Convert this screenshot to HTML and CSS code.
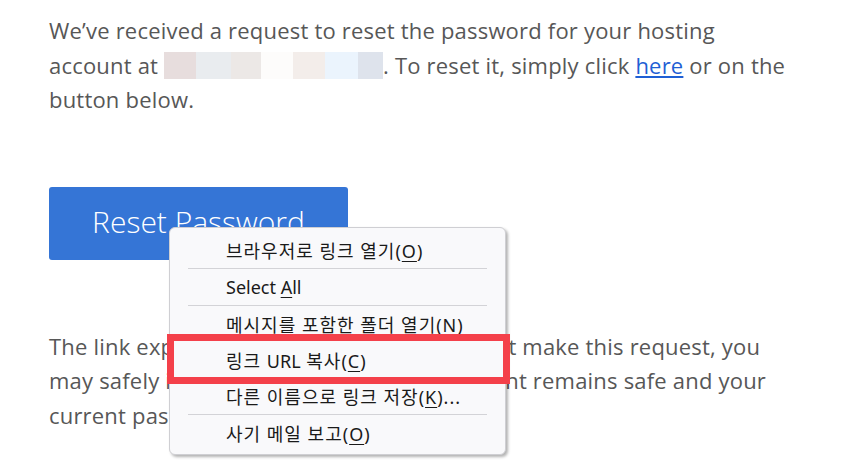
FILE: index.html
```html
<!DOCTYPE html>
<html lang="en">
<head>
<meta charset="utf-8">
<title>Reset password</title>
<link rel="stylesheet" href="styles.css">
</head>
<body>
<div class="mail">
  <p class="para">We’ve received a request to reset the password for your hosting<br>account at <span class="blur"><span class="b1"></span><span class="b2"></span><span class="b3"></span><span class="b4"></span><span class="b5"></span><span class="b6"></span><span class="b7"></span></span>. To reset it, simply click <a class="link" href="#">here</a> or on the<br>button below.</p>
  <a class="btn" href="#">Reset Password</a>
  <p class="para para2">The link expires after 24 hours. If you did not make this request, you<br>may safely ignore this email and your account remains safe and your<br>current password will not be changed.</p>
</div>

<div class="menu">
  <div class="item"><span>브라우저로 링크 열기(<u>O</u>)</span></div>
  <div class="sep"></div>
  <div class="item"><span class="lat">Select <u>A</u>ll</span></div>
  <div class="sep"></div>
  <div class="item"><span>메시지를 포함한 폴더 열기(<u>N</u>)</span></div>
  <div class="item"><span>링크 <span class="lat">URL</span> 복사(<u>C</u>)</span></div>
  <div class="item"><span>다른 이름으로 링크 저장(<u>K</u>)...</span></div>
  <div class="sep"></div>
  <div class="item"><span>사기 메일 보고(<u>O</u>)</span></div>
</div>
<div class="highlight"></div>
</body>
</html>
```

FILE: styles.css
```css
html, body {
  margin: 0;
  padding: 0;
  background: #ffffff;
}
body {
  width: 857px;
  height: 470px;
  overflow: hidden;
  position: relative;
}
.mail {
  padding: 13px 0 0 49px;
  font-family: "Open Sans", "Liberation Sans", sans-serif;
  font-size: 22px;
  line-height: 34.5px;
  color: #575757;
  letter-spacing: 0.2px;
}
.para {
  margin: 0;
  white-space: nowrap;
}
.para2 {
  margin-top: 69px;
}
.blur {
  display: inline-flex;
  vertical-align: -5px;
  height: 27px;
}
.blur span {
  display: block;
  height: 27px;
}
.b1 { width: 32px; background: #e7dddd; }
.b2 { width: 35px; background: #e9ecef; }
.b3 { width: 30px; background: #ece8e6; }
.b4 { width: 32px; background: #fdfcfb; }
.b5 { width: 32px; background: #f3edea; }
.b6 { width: 33px; background: #ebf4fd; }
.b7 { width: 25px; background: #dee3ec; }
.link {
  color: #1f5fd4;
  text-decoration: underline;
}
.btn {
  display: flex;
  align-items: center;
  justify-content: center;
  margin-top: 70px;
  width: 299px;
  height: 73px;
  background: #3575d6;
  border-radius: 3px;
  color: #ffffff;
  font-weight: 300;
  font-size: 30px;
  letter-spacing: 0;
  text-decoration: none;
  box-sizing: border-box;
  padding-bottom: 2px;
}
.menu {
  position: absolute;
  left: 169px;
  top: 227px;
  width: 337px;
  height: 228px;
  box-sizing: border-box;
  padding: 4px 0 3px;
  background: #f9f9fb;
  border: 1px solid #cfcfd3;
  border-radius: 6px;
  box-shadow: 2px 2px 3px rgba(0, 0, 0, 0.3);
  font-family: "Noto Sans", "Noto Sans CJK KR", sans-serif;
  font-size: 18px;
  color: #1a1a1a;
}
.item {
  height: 36px;
  display: flex;
  align-items: center;
  padding-left: 56px;
  white-space: nowrap;
  letter-spacing: 1px;
}
.lat {
  letter-spacing: 0;
}
.item u {
  text-underline-offset: 3px;
}
.sep {
  height: 1px;
  margin: 0 18px 0 18px;
  background: #d3d3d7;
}
.highlight {
  position: absolute;
  left: 167px;
  top: 334px;
  width: 343px;
  height: 50px;
  box-sizing: border-box;
  border: 7px solid #f4404a;
}
```
